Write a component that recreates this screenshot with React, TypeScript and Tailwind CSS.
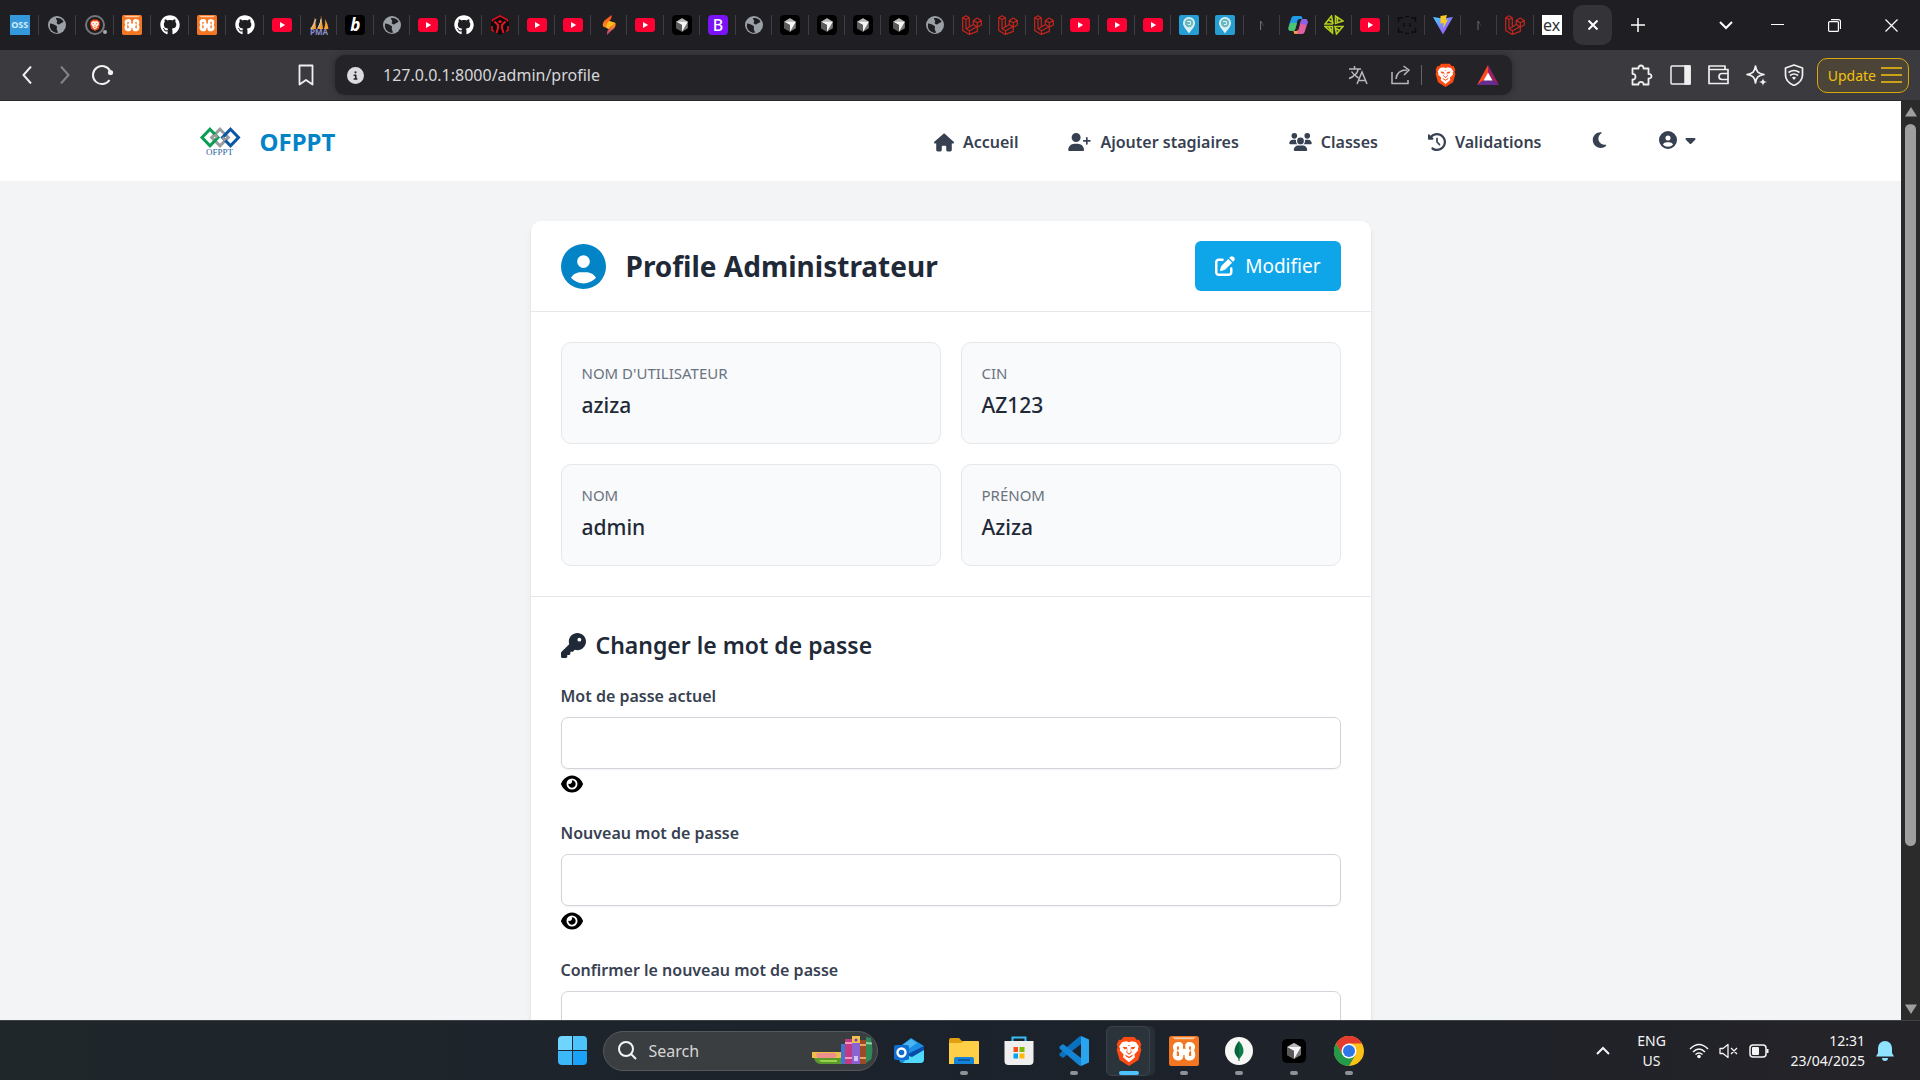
import React from "react";
import {
  FaHouse, FaUserPlus, FaUsers, FaClockRotateLeft, FaMoon, FaCircleUser, FaCaretDown,
  FaPenToSquare, FaKey, FaEye, FaGithub, FaCircleInfo,
} from "react-icons/fa6";

const svg = { xmlns: "http://www.w3.org/2000/svg" };

/* ---------- favicons ---------- */

function Youtube() {
  return (
    <svg {...svg} viewBox="0 0 20 20" className="size-5">
      <rect y="3" width="20" height="14" rx="3" fill="#ff0033" />
      <path d="M8 7v6l5.200-3z" fill="#fff" />
    </svg>
  );
}

function Globe() {
  return (
    <svg {...svg} viewBox="0 0 20 20" className="size-5">
      <circle cx="10" cy="10" r="9" fill="#9aa0a6" />
      <path d="M3 8.500c2.500.2 4.500.8 6.500 2.400 1.300 1-.2 2 .3 3.600.3 1 1.400 1.600.8 3.400-4 .2-7-2.700-7.700-5.800zM9 3.200c3-.8 6 .6 7.500 3.300-1.200 1.700-2.200 1.200-3.300 2.300-1 1-2 .7-3.300-.4-.9-.8.6-1.600.3-2.700-.2-.9-1.600-1.300-1.200-2.500z" fill="#1f1e23" />
    </svg>
  );
}

function Xampp({ large = false }: { large?: boolean }) {
  return (
    <svg {...svg} viewBox="0 0 30 30" className={large ? "size-[30px]" : "size-5"}>
      <rect width="30" height="30" rx="2.500" fill="#f37623" />
      <path d="M3 1.200h24l-3 2H6z" fill="#fbc9a2" />
      <path d="M9.500 6C13 6 14.500 8 14 11l-.3 1.700h3L16.300 11C15.800 8 17.500 6 20.500 6c5 0 7 4.500 4.500 8.500 3 5 .5 10-4.500 10-4 0-5.300-2.500-4.800-5.500h-1.400c.3 3-1.300 5.500-4.800 5.500-5 0-7.500-5-4.500-10C2.500 10.500 4.500 6 9.500 6z" fill="#fff" />
      <path d="M8 10.500h2v2L8.800 15l1.200 1.500v3.500H7.800v-4l1-1.500-.8-1.500zM20 10.500h2v2.500l-.8 1.500 1 1.500v4H20v-3.500L21.200 15 20 12.500z" fill="#f37623" />
    </svg>
  );
}

function Cursor({ large = false }: { large?: boolean }) {
  return (
    <svg {...svg} viewBox="0 0 24 24" className={large ? "size-6" : "size-5"}>
      <rect width="24" height="24" rx="5" fill="#000" />
      <path d="M12 4l7 4v8l-7 4-7-4V8z" fill="#777" />
      <path d="M5 8l7-4 7 4-7 1z" fill="#b5b5b5" />
      <path d="M5 8h14l-7 12v-8z" fill="#f4f4f4" />
      <path d="M5 8l7 4v8l-7-4z" fill="#5a5a5a" />
    </svg>
  );
}

function Brave({ className }: { className: string }) {
  return (
    <svg {...svg} viewBox="0 0 24 28" className={className}>
      <path d="M7 1h10l2.500 2.800 2-.2L23.500 8l-.8 2 .8 3-2.700 9.500L12 28l-8.800-5.500L.5 13l.8-3-.8-2 2-4.400 2 .2z" fill="#fb4a12" />
      <path d="M12 5.800l2.500-.8 4 .8 2.700 4-.9 1.800.4 1.800-3.700 3.800.6 2.600L12 24.500l-5.600-4.700.6-2.600-3.700-3.800.4-1.800-.9-1.800 2.700-4 4-.8z" fill="#fff" />
      <path d="M6 10l4.300.6-.6 1.800-2.200-.3zM18 10l-4.300.6.6 1.800 2.200-.3zM10.800 8.500h2.400L12 9.300zM11 10.500l-.8 4.300 1.300 1.300h1l1.300-1.300-.8-4.300 1.600 4.700L12 17.500l-2.600-2.300zM8.300 17.200L12 19.400l3.700-2.200-.9 1.900L12 20.800l-2.800-1.700z" fill="#fb4a12" />
    </svg>
  );
}

function BraveRing() {
  return (
    <span className="relative grid size-5 place-items-center rounded-full border-2 border-[#77777b]">
      <Brave className="h-3 w-3" />
      <span className="absolute -right-1 -bottom-px size-1 rounded-full bg-[#aaa]" />
    </span>
  );
}

function Pma() {
  return (
    <span className="relative grid size-5 place-items-center">
      <svg {...svg} viewBox="0 0 20 20" className="size-5">
        <path d="M1 14Q5 9 6 2l1 12zM8 14Q12 8 12 0l2 14zM15 14q2-5 1-10 3 5 3.500 10z" fill="#f6a131" />
        <path d="M2 14Q6 9 7 4M9 13q3-6 3-9" stroke="#c9c9d8" strokeWidth="1" fill="none" />
      </svg>
      <span className="absolute bottom-0 text-[8px] leading-[6px] font-bold text-[#8c8fca]">PMA</span>
    </span>
  );
}

function Fist() {
  return (
    <svg {...svg} viewBox="0 0 20 20" className="size-5">
      <path d="M10 0l9 5v10l-9 5-9-5V5z" fill="#0b0b0d" />
      <path d="M2.500 6.500V5L10 .8 17.500 5v1.500" stroke="#e5121e" strokeWidth="1.500" fill="none" />
      <path d="M4.500 6.500L8 10v3l-1.500 5M15.500 6.500L12 10v3l1.500 5" stroke="#e5121e" strokeWidth="2" fill="none" />
      <path d="M2 11v4l2 1.500M18 11v4l-2 1.500" stroke="#e5121e" strokeWidth="1.500" fill="none" />
      <circle cx="10" cy="6.500" r="1.600" fill="#e5121e" />
    </svg>
  );
}

function Flame() {
  return (
    <svg {...svg} viewBox="0 0 20 20" className="size-5">
      <defs>
        <linearGradient id="flame" x1="0" y1="0" x2="0" y2="1">
          <stop offset="0" stopColor="#ff4b1f" /><stop offset=".55" stopColor="#ff8a1d" /><stop offset="1" stopColor="#b028a5" />
        </linearGradient>
      </defs>
      <path d="M12.500 0c.6 3-.8 4.500-2.300 6l6.300 2c.8 3-1 5.500-4 7.500L8 20c-.5-3 .5-4.500 2-6l-6-2.500c-1-3 .5-5.500 3.500-7.500z" fill="url(#flame)" />
      <path d="M10.200 6c-1.700 1.700-3.200 3.500-2.700 7L10 14c0-2.500 3-3.500 6.500-6z" fill="#ffc01f" />
    </svg>
  );
}

function Pin() {
  return (
    <svg {...svg} viewBox="0 0 20 20" className="size-5">
      <rect width="20" height="20" rx="2" fill="#269ed4" />
      <path d="M10 2a6 6 0 0 1 6 6c0 4-4 7-6 10.500C8 15 4 12 4 8a6 6 0 0 1 6-6z" fill="#d9f1f4" />
      <circle cx="10" cy="8" r="4.200" fill="#6db8bd" />
      <path d="M8 6.500h3.500v3H9" stroke="#d9f1f4" fill="none" />
    </svg>
  );
}

function Copilot() {
  return (
    <svg {...svg} viewBox="0 0 20 20" className="size-5">
      <path d="M6 1h6c2 0 2 1 2.500 3H12c-2 0-2.500 1-3 3l-1.500 6c-.5 2-1 3-3 3H3c-2 0-3-2-2.500-4L3 4c.5-2 1.500-3 3-3z" fill="#1f9be8" />
      <path d="M2 8l-1.500 5c-.3 2 .5 3 2.500 3h2c1.500 0 2.200-1 2.600-3L9 8z" fill="#4fc26b" />
      <path d="M14 19H8c-2 0-2-1-2.500-3H8c2 0 2.500-1 3-3l1.500-6c.5-2 1-3 3-3H17c2 0 3 2 2.500 4L17 16c-.5 2-1.500 3-3 3z" fill="#e0609d" />
      <path d="M12 8.500L13 6c.4-1.500 1.200-2 2.600-2H17c2 0 3 2 2.500 4l-.6 2z" fill="#8a62e8" />
      <path d="M10 15l-1 4H7.500C6 19 6 18 5.500 16H8c1 0 1.600-.3 2-1z" fill="#f79a3b" />
    </svg>
  );
}

function GreenMesh() {
  return (
    <svg {...svg} viewBox="0 0 20 20" className="size-5" fill="none" stroke="#b4cf1d" strokeWidth="1.600">
      <path d="M9 9H1L7.500 1 9 9M4.500 5L8 7M11.500 1v7.500L19 6zM13.500 2v6M1 11.500h7.500v6.500zM4.500 11.500l3 4M11 11.500h8L12.500 19zM15.500 15.500l-3.500-2" />
    </svg>
  );
}

function DarkFrame() {
  return (
    <svg {...svg} viewBox="0 0 20 20" className="size-5" fill="none" stroke="#0c0c0e" strokeWidth="1.500">
      <path d="M1.500 7V3H6M14 3h4.500v4M18.500 13v4H14M6 17H1.500v-4M8 1.500h4M8 18.500h4M7 8v4M13 8v4" />
    </svg>
  );
}

function Vite() {
  return (
    <svg {...svg} viewBox="0 0 20 20" className="size-5">
      <defs>
        <linearGradient id="vite" x1="0" y1="0" x2="1" y2="1"><stop offset="0" stopColor="#41d1ff" /><stop offset="1" stopColor="#bd34fe" /></linearGradient>
      </defs>
      <path d="M0 2l10 1.500L20 2 10 19.500z" fill="url(#vite)" />
      <path d="M7.500 1L14 0l-1.500 5 2.500-.4-5 9 .7-5.600-3.200.6z" fill="#ffc920" />
    </svg>
  );
}

function Laravel() {
  return (
    <svg {...svg} viewBox="0 0 20 20" className="size-5" fill="none" stroke="#c4261d" strokeWidth="1.200" strokeLinejoin="round">
      <path d="M.7 2.700L4 .8l3.300 1.900v9.200l4-2.300V5.400l4-2.300 4 2.300v4.600l-4 2.300v4.100L7.300 19.400.7 15.500zM.7 2.700L4 4.600l3.300-1.900M4 4.600v9.200l3.300-1.900M4 13.800l3.600 2 7.700-4.300M7.500 16v3.400M11.300 5.400l4 2.300 4-2.300M15.300 7.700v4.600M11.300 9.600l4 2.500" />
    </svg>
  );
}

const letters = {
  oss: <span className="grid size-5 place-items-center bg-[#3498db] text-[9px] font-bold text-[#d7ebf8]">OSS</span>,
  b: <span className="grid size-5 place-items-center rounded bg-black text-[17px] leading-5 font-bold text-white italic">b</span>,
  bootstrap: <span className="grid size-5 place-items-center rounded-sm bg-[#7a13f5] text-[16px] leading-5 font-medium text-white">B</span>,
  n: <span className="bg-linear-to-r from-[#d8d8da] to-transparent to-70% bg-clip-text pl-1 text-[13px] leading-5 text-transparent">N</span>,
  ex: <span className="grid size-5 place-items-center bg-white text-[16px] leading-5 text-[#333]">ex</span>,
};

const github = <FaGithub className="size-5 text-white" />;

const pinned: [string, React.ReactNode][] = [
  ["OSS", letters.oss], ["Page", <Globe />], ["Brave", <BraveRing />], ["XAMPP", <Xampp />],
  ["GitHub", github], ["XAMPP", <Xampp />], ["GitHub", github], ["YouTube", <Youtube />],
];

const open: [string, React.ReactNode][] = [
  ["phpMyAdmin", <Pma />], ["b", letters.b], ["Page", <Globe />], ["YouTube", <Youtube />], ["GitHub", github],
  ["Page", <Fist />], ["YouTube", <Youtube />], ["YouTube", <Youtube />], ["Page", <Flame />], ["YouTube", <Youtube />],
  ["Cursor", <Cursor />], ["Bootstrap", letters.bootstrap], ["Page", <Globe />], ["Cursor", <Cursor />], ["Cursor", <Cursor />],
  ["Cursor", <Cursor />], ["Cursor", <Cursor />], ["Page", <Globe />], ["Laravel", <Laravel />], ["Laravel", <Laravel />],
  ["Laravel", <Laravel />], ["YouTube", <Youtube />], ["YouTube", <Youtube />], ["YouTube", <Youtube />], ["Map", <Pin />],
  ["Map", <Pin />], ["New tab", letters.n], ["Copilot", <Copilot />], ["Page", <GreenMesh />], ["YouTube", <Youtube />],
  ["Page", <DarkFrame />], ["Vite", <Vite />], ["New tab", letters.n], ["Laravel", <Laravel />], ["Express", letters.ex],
];

function Tab({ name, icon, line = true }: { name: string; icon: React.ReactNode; line?: boolean }) {
  return (
    <button aria-label={name} className="relative flex h-5 flex-1 items-center justify-center">
      {icon}
      {line && <span className="absolute right-0 h-5 w-px bg-[#3f3e44]" />}
    </button>
  );
}

/* ---------- browser chrome ---------- */

const stroke = { ...svg, fill: "none", stroke: "currentColor", strokeWidth: 1.5 };

function TabStrip() {
  return (
    <div className="flex h-[50px] shrink-0 items-center bg-[#1f1e23] text-white">
      <div className="flex w-[301px] shrink-0 pl-px">
        {pinned.map(([n, i], k) => <Tab key={k} name={n} icon={i} />)}
      </div>
      <div className="flex w-[1269px] shrink-0">
        {open.map(([n, i], k) => <Tab key={k} name={n} icon={i} line={k < open.length - 1} />)}
      </div>
      <button aria-label="Close tab" className="ml-[3px] grid h-10 w-[39px] place-items-center rounded-[10px] bg-[#343338]">
        <svg {...stroke} strokeWidth="2" viewBox="0 0 10 10" className="size-[10px]"><path d="M.5.5l9 9M9.500.5l-9 9" /></svg>
      </button>
      <button aria-label="New tab" className="ml-[19px] grid size-[14px] place-items-center">
        <svg {...stroke} viewBox="0 0 14 14" className="size-[14px] overflow-visible"><path d="M7 0v14M0 7h14" /></svg>
      </button>
      <div className="ml-auto flex items-center gap-11 pr-[22px]">
        <button aria-label="Search tabs"><svg {...stroke} strokeWidth="2" viewBox="0 0 14 9" className="h-[9px] w-[14px]"><path d="M1 1l6 6 6-6" /></svg></button>
        <button aria-label="Minimize" className="-ml-[6px]"><svg {...stroke} strokeWidth="1" viewBox="0 0 13 13" className="size-[13px]"><path d="M0 5.500h13" /></svg></button>
        <button aria-label="Restore"><svg {...stroke} strokeWidth="1.200" viewBox="0 0 13 13" className="size-[13px]"><rect x=".6" y="2.600" width="9.800" height="9.800" rx="1" /><path d="M3 .6h7.500a2 2 0 0 1 2 2V10" /></svg></button>
        <button aria-label="Close"><svg {...stroke} strokeWidth="1.200" viewBox="0 0 13 13" className="size-[13px]"><path d="M.5.5l12 12M12.500.5l-12 12" /></svg></button>
      </div>
    </div>
  );
}

function Toolbar() {
  return (
    <div className="flex h-[51px] shrink-0 items-center border-b border-[#2a292e] bg-[#3b3a3f] text-[#f0f0f1]">
      <button aria-label="Back" className="ml-[22px]"><svg {...stroke} strokeWidth="2" viewBox="0 0 10 18" className="h-[18px] w-[10px]"><path d="M9 .5L1.500 9 9 17.500" /></svg></button>
      <button aria-label="Forward" className="ml-7 text-[#85848a]"><svg {...stroke} strokeWidth="2" viewBox="0 0 10 18" className="h-[18px] w-[10px]"><path d="M1 .5L8.500 9 1 17.500" /></svg></button>
      <button aria-label="Reload" className="ml-[22px]">
        <svg {...stroke} strokeWidth="2" viewBox="0 0 21 20" className="h-5 w-[21px] overflow-visible"><path d="M17.500 15A9 9 0 1 1 18 6" /><circle cx="18.500" cy="7.500" r="2.600" fill="currentColor" stroke="none" /></svg>
      </button>
      <button aria-label="Bookmark" className="ml-[185px]">
        <svg {...stroke} strokeWidth="1.800" viewBox="0 0 16 22" className="h-[22px] w-4"><path d="M1.500 1.500h13v19L8 16l-6.500 4.500z" strokeLinejoin="round" /></svg>
      </button>
      <div className="ml-[21px] flex h-10 flex-1 items-center rounded-[10px] bg-[#242328] px-3 shadow-[0_0_6px_#2a292e]">
        <FaCircleInfo className="size-[17px] shrink-0 text-[#dcdce0]" />
        <input aria-label="Address" readOnly defaultValue="127.0.0.1:8000/admin/profile" className="ml-[19px] min-w-0 flex-1 bg-transparent text-[16px] leading-6 text-[#d6d6d9] outline-none" />
        <div className="flex items-center text-[#b9b9bd]">
          <button aria-label="Translate"><svg {...stroke} viewBox="0 0 20 20" className="size-5"><path d="M1 4h12M6.500 1v3M10.500 4C9 9 5 12 1 13.500M3.500 6.500c2 3.500 4.500 5 7 6.500M9 19l5-12 5 12M10.500 15.500h7" /></svg></button>
          <button aria-label="Share" className="ml-[23px]"><svg {...stroke} viewBox="0 0 20 20" className="size-5"><path d="M1 7v11.500h16V15M5 14c.5-6 4-9 11-9M12.500 1L18 5l-5 5" /></svg></button>
          <span className="ml-[10px] h-5 w-px bg-[#66656a]" />
          <button aria-label="Brave Shields" className="ml-[13px]"><Brave className="h-6 w-[21px]" /></button>
          <button aria-label="Rewards" className="mr-px ml-[21px]">
            <svg {...svg} viewBox="0 0 22 20" className="h-5 w-[22px]"><path d="M11 0v8l-4 7-7 5z" fill="#ff4724" /><path d="M11 0l11 20-7-5-4-7z" fill="#9e1f63" /><path d="M0 20l7-5h8l7 5z" fill="#662d91" /><path d="M11 7.500l4.500 8h-9z" fill="#fff" /></svg>
          </button>
        </div>
      </div>
      <div className="ml-[119px] flex items-center gap-[17px]">
        <button aria-label="Extensions"><svg {...stroke} strokeWidth="1.800" viewBox="0 0 22 22" className="size-[22px]"><path d="M1.500 4.500h6C7 .5 13 .5 12.500 4.500h5v5.500c4-.5 4 5 0 4.500v6h-5c.5-3.500-5.500-3.500-5 0h-6v-5c4 .5 4-6 0-5.500z" strokeLinejoin="round" /></svg></button>
        <button aria-label="Sidebar"><svg {...stroke} viewBox="0 0 21 20" className="h-5 w-[21px]"><rect x="1" y="1" width="19" height="18" rx="1" /><path d="M15 1h5v18h-5z" fill="currentColor" /></svg></button>
        <button aria-label="Wallet"><svg {...stroke} strokeWidth="1.700" viewBox="0 0 21 20" className="h-5 w-[21px]"><path d="M1 4.500h19v14H1zM1 4.500V1h16v3.500M20 8.500h-6a3 3 0 0 0 0 6h6z" strokeLinejoin="round" /></svg></button>
        <button aria-label="Leo"><svg {...stroke} strokeWidth="1.700" viewBox="0 0 21 21" className="size-[21px] overflow-visible"><path d="M9.500 1c1 6 2.500 7.500 8.500 8.500-6 1-7.500 2.500-8.500 8.500-1-6-2.500-7.500-8.500-8.500 6-1 7.500-2.500 8.500-8.500z" strokeLinejoin="round" /><path d="M17 13c.5 2.800 1.200 3.500 4 4-2.800.5-3.500 1.200-4 4-.5-2.800-1.200-3.500-4-4 2.800-.5 3.500-1.200 4-4z" fill="currentColor" stroke="none" /></svg></button>
        <button aria-label="VPN"><svg {...stroke} strokeWidth="1.700" viewBox="0 0 20 22" className="h-[22px] w-5"><path d="M10 1l8.500 3v7c0 5-4 8.500-8.500 10.500C5.500 19.500 1.500 16 1.500 11V4z" strokeLinejoin="round" /><path d="M4.500 8.500q5.500-4 11 0M6 11.500q4-3 8 0" /><path d="M8 13.500q2-1.500 4 0L10 16z" fill="currentColor" stroke="none" /></svg></button>
      </div>
      <button className="mr-[11px] ml-[13px] flex h-[35px] items-center gap-[5px] rounded-[10px] border border-[#d9a90c] bg-[#4c4537] pr-[6px] pl-[10px] text-[14px] text-[#f3c011]">
        Update
        <svg {...stroke} viewBox="0 0 21 16" className="h-4 w-[21px]"><path d="M0 1h21M0 8h21M0 15h21" /></svg>
      </button>
    </div>
  );
}

/* ---------- web page ---------- */

function Logo() {
  return (
    <svg {...svg} viewBox="0 0 40 30" className="h-[30px] w-10 overflow-visible" fill="none" strokeWidth="3">
      <path d="M20 2.200l8.300 8.300-8.300 8.300-8.300-8.300z" stroke="#9a9b9d" />
      <path d="M10 2.200l8 8.300-8 8.300-8-8.300z" stroke="#0b9d54" />
      <path d="M30.500 2.200l8 8.300-8 8.300-8-8.300z" stroke="#0b56a4" />
      <path d="M14.500 7.500l3 3" stroke="#9a9b9d" />
      <path d="M25.500 13.500l-3-3" stroke="#9a9b9d" />
      <text x="6" y="28" fill="#2a63a5" stroke="none" fontFamily="Liberation Serif, serif" fontSize="9" fontWeight="400">OFPPT</text>
    </svg>
  );
}

const links: [React.ReactNode, string][] = [
  [<FaHouse className="h-[19px] w-5" />, "Accueil"],
  [<FaUserPlus className="h-[18px] w-[23px]" />, "Ajouter stagiaires"],
  [<FaUsers className="h-[18px] w-[23px]" />, "Classes"],
  [<FaClockRotateLeft className="size-[18px]" />, "Validations"],
];

function Navbar() {
  return (
    <header className="h-20 bg-white px-6 pt-[2px]">
      <div className="mx-auto flex h-full max-w-[1502px] items-center justify-between">
        <a href="#accueil" className="flex items-center gap-5 text-[24px] leading-8 font-bold text-[#0284c7]"><Logo />OFPPT</a>
        <nav className="flex items-center gap-[50px] pr-[6px] text-[#374151]">
          {links.map(([icon, text]) => (
            <a key={text} href="#" className="flex items-center gap-[9px] text-[16px] leading-6 font-semibold">{icon}{text}</a>
          ))}
          <button aria-label="Mode sombre" className="pb-1"><FaMoon className="h-[18px] w-[15px]" /></button>
          <button aria-label="Compte" className="ml-[2px] flex items-center gap-2 pb-1"><FaCircleUser className="size-[18px]" /><FaCaretDown className="h-4 w-[11px]" /></button>
        </nav>
      </div>
    </header>
  );
}

const infos = [["NOM D'UTILISATEUR", "aziza"], ["CIN", "AZ123"], ["NOM", "admin"], ["PRÉNOM", "Aziza"]];
const fields = [["actuel", "Mot de passe actuel"], ["nouveau", "Nouveau mot de passe"], ["confirmer", "Confirmer le nouveau mot de passe"]];

function Profile() {
  return (
    <main className="mx-auto mt-10 max-w-[840px] rounded-[10px] bg-white text-[#1f2937] shadow-md">
      <div className="flex items-center justify-between border-b border-[#e5e7eb] px-[30px] py-5">
        <div className="flex items-center gap-5">
          <FaCircleUser className="size-[45px] text-[#0284c7]" />
          <h1 className="text-[28px] leading-9 font-bold">Profile Administrateur</h1>
        </div>
        <button className="flex h-[50px] items-center gap-[10px] rounded-md bg-[#0ea5e9] px-5 text-[19px] text-white">
          <FaPenToSquare className="size-5" />Modifier
        </button>
      </div>
      <dl className="grid grid-cols-2 gap-5 border-b border-[#e5e7eb] p-[30px]">
        {infos.map(([k, v]) => (
          <div key={k} className="rounded-[10px] border border-[#e5e7eb] bg-[#f9fafb] p-5">
            <dt className="text-[15px] leading-5 text-[#6b7280]">{k}</dt>
            <dd className="mt-[6px] mb-[2px] text-[21px] leading-8 font-medium">{v}</dd>
          </div>
        ))}
      </dl>
      <form className="p-[30px]">
        <h2 className="mb-5 flex items-center gap-[10px] text-[23px] leading-[37px] font-semibold"><FaKey className="size-[25px]" />Changer le mot de passe</h2>
        {fields.map(([id, label]) => (
          <div key={id} className="mb-[22px]">
            <label htmlFor={id} className="block text-[16px] leading-[25px] font-semibold text-[#374151]">{label}</label>
            <input id={id} type="password" className="mt-2 block h-[52px] w-full rounded-[7px] border border-[#d1d5db] bg-white px-3 shadow-xs" />
            <button type="button" aria-label="Afficher" className="flex h-[30px] items-center text-black"><FaEye className="h-5 w-[22px]" /></button>
          </div>
        ))}
      </form>
    </main>
  );
}

function Scrollbar() {
  return (
    <div className="flex w-[19px] shrink-0 flex-col items-center bg-[#2b2b2b] py-[6px] text-[#9f9f9f]">
      <svg {...svg} viewBox="0 0 12 10" className="h-[10px] w-3 shrink-0" fill="currentColor"><path d="M6 0l6 9.500H0z" /></svg>
      <div className="mt-[7px] h-[722px] w-[11px] rounded-full bg-[#9f9f9f]" />
      <svg {...svg} viewBox="0 0 12 10" className="mt-auto h-[10px] w-3 shrink-0" fill="currentColor"><path d="M6 10l6-9.500H0z" /></svg>
    </div>
  );
}

/* ---------- taskbar ---------- */

function Books() {
  return (
    <svg {...svg} viewBox="0 0 62 29" className="h-[29px] w-[62px]">
      <path d="M1 16h29v6H1z" fill="#efbd49" /><path d="M6 17h18l2 3-3 2H7l-2-2z" fill="#ed8f8a" />
      <path d="M3 22h27v6H9q-5-1-6-6z" fill="#5b9b2b" /><path d="M8 24h18v2H10z" fill="#9bd04a" />
      <path d="M30 8h4v20h-4z" fill="#3f76d1" /><path d="M34 3h7v25h-7z" fill="#c23a84" /><path d="M34 6h7v2h-7zM34 21h7v2h-7z" fill="#f09ac0" />
      <path d="M41 0h8v28h-8z" fill="#8a63d2" /><path d="M41 0h8v7h-8z" fill="#f2c14b" /><path d="M43 20h4v5h-4z" fill="#d3c0f5" /><circle cx="45" cy="4" r="1.500" fill="#6a3fb5" />
      <path d="M49 4h6v24h-6z" fill="#9a4a27" /><path d="M49 8h6v2h-6zM49 21h6v2h-6z" fill="#e8a365" />
      <path d="M55 1l5 1 1.500 12-1 9-5.500 4z" fill="#2f8a57" /><path d="M55 6l6 .5v2l-6-.5z" fill="#8fd2a6" />
    </svg>
  );
}

const apps: [string, React.ReactNode, boolean][] = [
  ["Outlook", (
    <svg {...svg} viewBox="0 0 30 28" className="h-7 w-[30px]">
      <path d="M5 10L17 1l13 8v13a4 4 0 0 1-4 4H9a4 4 0 0 1-4-4z" fill="#1a8fe3" /><path d="M9 8l8-6 6 4-13 9z" fill="#49b6f2" /><path d="M14 20L30 10v12a4 4 0 0 1-4 4H9z" fill="#50d9fb" /><path d="M30 9L12 18l6 2 12-7z" fill="#0a4ba8" />
      <rect y="8" width="15" height="15" rx="2" fill="#0f6cd0" /><circle cx="7.500" cy="15.500" r="4" fill="none" stroke="#fff" strokeWidth="2.400" />
    </svg>), false],
  ["Explorer", (
    <svg {...svg} viewBox="0 0 30 28" className="h-7 w-[30px]"><path d="M0 3a2 2 0 0 1 2-2h8l3 3h17v8H0z" fill="#e0a010" /><path d="M0 6h12l3-2h13a2 2 0 0 1 2 2v21H0z" fill="#ffcf48" /><path d="M5 27v-5a2 2 0 0 1 2-2h16a2 2 0 0 1 2 2v5z" fill="#1583d8" /><path d="M9 23h12" stroke="#0b4f92" strokeWidth="1.500" /></svg>), true],
  ["Store", (
    <svg {...svg} viewBox="0 0 30 30" className="size-[30px]"><path d="M8.500 6V1.500h13V6" fill="none" stroke="#36bdf2" strokeWidth="2" /><path d="M.5 5h29v20a4 4 0 0 1-4 4h-21a4 4 0 0 1-4-4z" fill="#efefef" /><path d="M9.500 11H14v5H9.500z" fill="#f25022" /><path d="M15.500 11h5v5h-5z" fill="#7fba00" /><path d="M9.500 17.500H14v5H9.500z" fill="#00a4ef" /><path d="M15.500 17.500h5v5h-5z" fill="#ffb900" /></svg>), false],
  ["VS Code", (
    <svg {...svg} viewBox="0 0 30 30" className="size-[30px]"><path d="M22 0l8 3.500v23L22 30z" fill="#2ba4f0" /><path d="M22 0v8L4 22l-3.500-2.500v-2L20 .8z" fill="#0a71c0" /><path d="M22 30v-8L4 8 .5 10.500v2L20 29.200z" fill="#1484d4" /></svg>), true],
  ["Brave", <Brave className="h-[30px] w-[26px]" />, true],
  ["XAMPP", <Xampp large />, true],
  ["MongoDB", (
    <svg {...svg} viewBox="0 0 28 28" className="size-7"><circle cx="14" cy="14" r="14" fill="#f7f7f5" /><path d="M14 4c3 3.500 4.500 6.500 4.500 10S16 20 14 22z" fill="#0c7c4b" /><path d="M14 4c-3 3.500-4.500 6.500-4.500 10S12 20 14 22z" fill="#06643a" /><path d="M14 20v4" stroke="#06643a" /></svg>), true],
  ["Cursor", <Cursor large />, true],
  ["Chrome", (
    <svg {...svg} viewBox="0 0 30 30" className="size-[30px]"><circle cx="15" cy="15" r="15" fill="#fbc116" /><path d="M2 7.500A15 15 0 0 1 28 7.500H15l-6.500 11.200z" fill="#e33b2e" /><path d="M2 7.500A15 15 0 0 0 15 30l6.500-11.300h-13z" fill="#229a49" /><circle cx="15" cy="15" r="7.500" fill="#fff" /><circle cx="15" cy="15" r="6" fill="#2f76e8" /></svg>), true],
];

function Taskbar() {
  return (
    <footer className="flex h-[60px] shrink-0 items-center justify-between border-t border-[#3e4246] bg-linear-to-r from-[#20272b] via-[#1b222b] to-[#242328] text-[#f5f5f5]">
      <div className="w-[547px]" />
      <div className="flex items-center">
        <button aria-label="Start" className="mr-4 grid size-[29px] grid-cols-2 gap-px">
          <span className="rounded-tl-sm bg-[#6fd5ff]" /><span className="rounded-tr-sm bg-[#4cc4fb]" />
          <span className="rounded-bl-sm bg-[#3cb8f8]" /><span className="rounded-br-sm bg-[#1ba1f5]" />
        </button>
        <label className="flex h-10 w-[275px] items-center rounded-full border border-[#55595c] bg-[#3b3e41] pr-1 pl-[14px]">
          <svg {...stroke} strokeWidth="2" viewBox="0 0 19 19" className="size-[19px] shrink-0"><circle cx="8" cy="8" r="7" /><path d="M13 13l5 5" /></svg>
          <input aria-label="Search" placeholder="Search" className="ml-3 min-w-0 flex-1 bg-transparent text-[16px] leading-6 outline-none placeholder:text-[#d6d6d6]" />
          <Books />
        </label>
        <div className="ml-1 flex">
          {apps.map(([name, icon, running]) => (
            <button key={name} aria-label={name} className="relative flex h-[50px] w-[55px] items-center justify-center">
              {name === "Brave" && <><span className="absolute left-1 h-[50px] w-[49px] rounded-md bg-[#262e36]" /><span className="absolute left-1 h-[50px] w-11 rounded-md border border-[#3b424a] bg-[#2b333b]" /></>}
              <span className="relative">{icon}</span>
              {running && <span className={name === "Brave" ? "absolute bottom-px h-1 w-5 rounded-full bg-[#4cc2ff]" : "absolute bottom-px h-1 w-2 rounded-full bg-[#8e9297]"} />}
            </button>
          ))}
        </div>
      </div>
      <div className="flex w-[533px] items-center justify-end pr-[26px] text-[14px] leading-5">
        <button aria-label="Hidden icons"><svg {...stroke} strokeWidth="2" viewBox="0 0 14 9" className="h-[9px] w-[14px]"><path d="M1 8l6-6 6 6" /></svg></button>
        <button className="ml-[26px] w-8 text-center">ENG<br />US</button>
        <button aria-label="System" className="ml-[21px] flex items-center gap-[10px]">
          <svg {...stroke} strokeWidth="1.600" viewBox="0 0 20 16" className="h-4 w-5"><path d="M1 6q9-9 18 0M4 9q6-6 12 0M6.500 11.500q3.500-3 7 0" /><circle cx="10" cy="13.500" r="1.800" fill="currentColor" stroke="none" /></svg>
          <svg {...stroke} strokeWidth="1.300" viewBox="0 0 20 16" className="h-4 w-5"><path d="M1 5.500h3L9 1.500v13L4 10.500H1zM12 5l6 6M18 5l-6 6" strokeLinejoin="round" /></svg>
          <svg {...stroke} viewBox="0 0 20 14" className="h-[14px] w-5"><rect x="1" y="1" width="16" height="12" rx="3" /><rect x="3" y="3" width="7" height="8" rx="1" fill="currentColor" stroke="none" /><path d="M18.500 5v4" strokeWidth="2" /></svg>
        </button>
        <time className="ml-[22px] text-right">12:31<br />23/04/2025</time>
        <button aria-label="Notifications" className="ml-[11px]"><svg {...svg} viewBox="0 0 18 20" className="h-5 w-[18px]" fill="#8fe3ff"><path d="M9 0a7 7 0 0 1 7 7v5l2 3.500H0L2 12V7a7 7 0 0 1 7-7zM6 17h6a3 3 0 0 1-6 0z" /></svg></button>
      </div>
    </footer>
  );
}

export default function App() {
  return (
    <div className="flex h-screen flex-col overflow-hidden font-['Noto_Sans',sans-serif]">
      <TabStrip />
      <Toolbar />
      <div className="flex min-h-0 flex-1">
        <div className="min-w-0 flex-1 overflow-hidden bg-[#f3f4f6]">
          <Navbar />
          <Profile />
        </div>
        <Scrollbar />
      </div>
      <Taskbar />
    </div>
  );
}
